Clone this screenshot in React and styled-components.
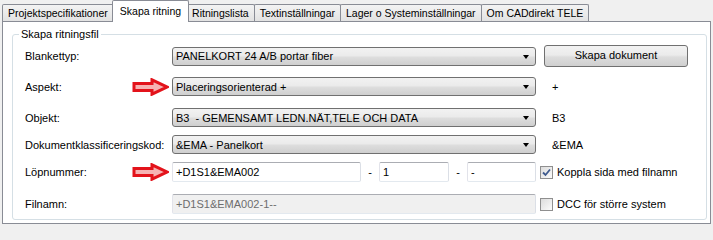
import React from "react";
import styled, { createGlobalStyle } from "styled-components";

const GlobalStyle = createGlobalStyle`
  html, body {
    margin: 0;
    padding: 0;
    background: #f0f0f0;
  }
  body {
    font-family: "Liberation Sans", Arial, sans-serif;
    font-size: 11px;
    color: #000;
  }
`;

const Window = styled.div`
  width: 713px;
  height: 224px;
  overflow: hidden;
  display: flex;
  flex-direction: column;
  background: #f0f0f0;
`;

const TabStrip = styled.div`
  display: flex;
  align-items: flex-end;
  height: 21px;
  padding-left: 2px;
  position: relative;
  z-index: 2;
`;

const Tab = styled.div`
  display: flex;
  align-items: center;
  box-sizing: border-box;
  height: ${({ $active }) => ($active ? "22px" : "17px")};
  margin-bottom: ${({ $active }) => ($active ? "-1px" : "0")};
  margin-left: ${({ $active, $first }) => ($first ? "0" : $active ? "-2px" : "-1px")};
  margin-right: ${({ $active }) => ($active ? "-2px" : "0")};
  padding: ${({ $active }) => ($active ? "0 7px 1px" : "0 5px")};
  border: 1px solid #898c95;
  border-bottom: none;
  border-radius: 2px 2px 0 0;
  background: ${({ $active }) =>
    $active ? "#ffffff" : "linear-gradient(#f3f3f3, #ebebeb 50%, #e2e2e2)"};
  font-size: 10.5px;
  position: relative;
  z-index: ${({ $active }) => ($active ? 2 : 1)};
  white-space: nowrap;
`;

const Panel = styled.div`
  flex: 1;
  margin: 0 2px 0 2px;
  border: 1px solid #898c95;
  background: #fff;
  position: relative;
  z-index: 1;
`;

const Group = styled.fieldset`
  margin: 6px 3px 0 9px;
  padding: 4px 0 5px 12px;
  border: 1px solid #d5dfe5;
  border-radius: 3px;
  min-width: 0;
`;

const Legend = styled.legend`
  margin-left: -6px;
  padding: 0 2px;
  line-height: 13px;
`;

const Row = styled.div`
  display: flex;
  align-items: center;
  height: ${({ $h }) => $h || 19}px;
  margin-top: ${({ $mt }) => $mt || 0}px;
`;

const LabelCell = styled.div`
  width: 147px;
  flex: none;
  display: flex;
  align-items: center;
  justify-content: space-between;
  padding-right: 3px;
  box-sizing: border-box;
`;

const Combo = styled.div`
  box-sizing: border-box;
  width: 364px;
  height: 19px;
  flex: none;
  display: flex;
  align-items: center;
  justify-content: space-between;
  padding: 0 6px 0 3px;
  border: 1px solid #707070;
  border-radius: 3px;
  background: linear-gradient(#f2f2f2, #ebebeb 45%, #dddddd 55%, #cfcfcf);
  white-space: nowrap;
`;

const Caret = styled.span`
  width: 0;
  height: 0;
  border-left: 3.5px solid transparent;
  border-right: 3.5px solid transparent;
  border-top: 4px solid #000;
  margin-top: 1px;
`;

const Button = styled.button`
  box-sizing: border-box;
  width: 144px;
  height: 22px;
  margin-left: 8px;
  padding: 0 0 2px;
  font: inherit;
  color: #000;
  border: 1px solid #707070;
  border-radius: 3px;
  background: linear-gradient(#f2f2f2, #ebebeb 45%, #dddddd 55%, #cfcfcf);
`;

const Note = styled.span`
  margin-left: 16px;
`;

const TextBox = styled.div`
  box-sizing: border-box;
  width: ${({ $w }) => $w}px;
  height: 20px;
  flex: none;
  display: flex;
  align-items: center;
  padding-left: 3px;
  border: 1px solid #abadb3;
  border-left-color: #e2e3ea;
  border-right-color: #dbdfe6;
  border-bottom-color: #e3e9ef;
  border-radius: 2px;
  background: ${({ $disabled }) => ($disabled ? "#f0f0f0" : "#fff")};
  color: ${({ $disabled }) => ($disabled ? "#6d6d6d" : "#000")};
  white-space: nowrap;
`;

const Dash = styled.span`
  width: ${({ $w }) => $w}px;
  text-align: center;
  flex: none;
`;

const CheckWrap = styled.label`
  display: flex;
  align-items: center;
  margin-left: 4px;
  gap: 4px;
`;

const Box = styled.span`
  box-sizing: border-box;
  width: 13px;
  height: 13px;
  border: 1px solid #8f8f8f;
  background: linear-gradient(135deg, #dcdcdc, #fbfbfb);
  display: flex;
  align-items: center;
  justify-content: center;
`;

const Arrow = () => (
  <svg width="37" height="18" viewBox="0 0 37 18">
    <polygon
      points="2,5.5 20,5.5 20,1.8 35,9 20,16.2 20,12.5 2,12.5"
      fill="#f6b3b3"
      stroke="#e3131b"
      strokeWidth="3"
      strokeLinejoin="miter"
    />
  </svg>
);

const CheckBox = ({ checked, children }) => (
  <CheckWrap>
    <Box>
      {checked && (
        <svg width="9" height="9" viewBox="0 0 9 9">
          <path d="M1 4.5 L3.5 7 L8 1.5" fill="none" stroke="#3e5a8e" strokeWidth="1.8" />
        </svg>
      )}
    </Box>
    {children}
  </CheckWrap>
);

const tabs = [
  "Projektspecifikationer",
  "Skapa ritning",
  "Ritningslista",
  "Textinställningar",
  "Lager o Systeminställningar",
  "Om CADdirekt TELE",
];

export default function App() {
  return (
    <>
      <GlobalStyle />
      <Window>
        <TabStrip>
          {tabs.map((t, i) => (
            <Tab key={t} $first={i === 0} $active={i === 1}>
              {t}
            </Tab>
          ))}
        </TabStrip>
        <Panel>
          <Group>
            <Legend>Skapa ritningsfil</Legend>
            <Row $h={22}>
              <LabelCell>Blankettyp:</LabelCell>
              <Combo>
                PANELKORT 24 A/B portar fiber
                <Caret />
              </Combo>
              <Button>Skapa dokument</Button>
            </Row>
            <Row $mt={10}>
              <LabelCell>
                Aspekt:
                <Arrow />
              </LabelCell>
              <Combo>
                Placeringsorienterad +
                <Caret />
              </Combo>
              <Note>+</Note>
            </Row>
            <Row $mt={12}>
              <LabelCell>Objekt:</LabelCell>
              <Combo>
                B3&nbsp; - GEMENSAMT LEDN.NÄT,TELE OCH DATA
                <Caret />
              </Combo>
              <Note>B3</Note>
            </Row>
            <Row $mt={8}>
              <LabelCell>Dokumentklassificeringskod:</LabelCell>
              <Combo>
                &amp;EMA - Panelkort
                <Caret />
              </Combo>
              <Note>&amp;EMA</Note>
            </Row>
            <Row $h={20} $mt={8}>
              <LabelCell>
                Löpnummer:
                <Arrow />
              </LabelCell>
              <TextBox $w={189}>+D1S1&amp;EMA002</TextBox>
              <Dash $w={18}>-</Dash>
              <TextBox $w={70}>1</TextBox>
              <Dash $w={18}>-</Dash>
              <TextBox $w={69}>-</TextBox>
              <CheckBox checked>Koppla sida med filnamn</CheckBox>
            </Row>
            <Row $h={20} $mt={12}>
              <LabelCell>Filnamn:</LabelCell>
              <TextBox $w={364} $disabled>
                +D1S1&amp;EMA002-1--
              </TextBox>
              <CheckBox>DCC för större system</CheckBox>
            </Row>
          </Group>
        </Panel>
      </Window>
    </>
  );
}
